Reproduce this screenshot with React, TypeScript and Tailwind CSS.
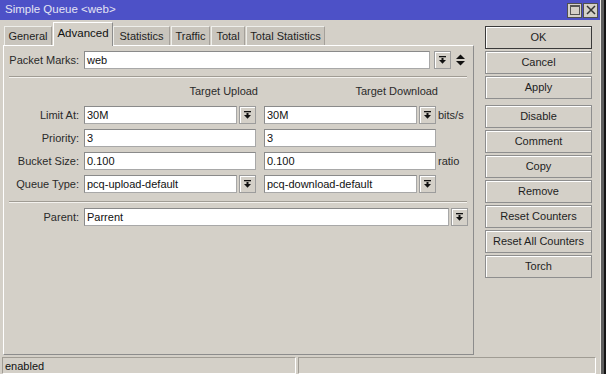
import React from 'react';

const DropIcon: React.FC = () => (
  <svg width="7" height="8" viewBox="0 0 7 8" className="block">
    <rect x="0" y="0" width="7" height="1.3" fill="#111" />
    <rect x="2.5" y="2" width="2" height="2.5" fill="#111" />
    <polygon points="0,4 7,4 3.5,7.8" fill="#111" />
  </svg>
);

const DropButton: React.FC = () => (
  <div className="flex h-[18px] w-[17px] shrink-0 items-center justify-center border border-[#9c9c9c] bg-[#d4d0c8] shadow-[inset_1px_1px_0_#fff]">
    <DropIcon />
  </div>
);

const Field: React.FC<{ value: string; w: string }> = ({ value, w }) => (
  <div
    className={`flex h-[18px] items-center border border-[#a8a8a8] border-l-[#8a8a8a] border-t-[#8a8a8a] bg-white pl-[2px] leading-none text-[#111] ${w}`}
  >
    {value}
  </div>
);

const Separator: React.FC = () => (
  <div className="ml-[5px] w-[458px] border-t border-b border-t-[#a09c94] border-b-[#f4f2ee]" />
);

const tabs = [
  { name: 'General', w: 'w-[48px] ml-[1px]' },
  { name: 'Advanced', w: 'w-[60px] ml-[1px]', active: true },
  { name: 'Statistics', w: 'w-[57px]' },
  { name: 'Traffic', w: 'w-[39px] ml-[1px]' },
  { name: 'Total', w: 'w-[34px] ml-[1px]' },
  { name: 'Total Statistics', w: 'w-[79px] ml-[1px]' },
];

const buttons = ['OK', 'Cancel', 'Apply', 'Disable', 'Comment', 'Copy', 'Remove', 'Reset Counters', 'Reset All Counters', 'Torch'];

const Label: React.FC<{ text: string }> = ({ text }) => (
  <div className="w-[76px] shrink-0 pr-[1px] text-right text-[#2a2a2a]">{text}</div>
);

const App: React.FC = () => {
  return (
    <div className="flex h-[374px] w-[606px] overflow-hidden bg-[#d4d0c8] font-['Liberation_Sans',Arial,sans-serif] text-[11px] text-[#1e1e1e]">
      <div className="flex w-[600px] flex-col">
        {/* title bar */}
        <div className="flex h-[20px] shrink-0 items-center justify-between bg-[#4d51c7] pl-[5px] pr-[2px] text-[#e4e4f4]">
          <span className="text-[11.5px]">Simple Queue &lt;web&gt;</span>
          <div className="flex gap-[1px]">
            <div className="flex h-[15px] w-[15px] items-center justify-center border border-[#505050] bg-[#d4d0c8]">
              <div className="h-[10px] w-[10px] border border-[#555] border-t-2" />
            </div>
            <div className="flex h-[15px] w-[15px] items-center justify-center border border-[#505050] bg-[#d4d0c8]">
              <svg width="10" height="10" viewBox="0 0 10 10">
                <path d="M1 1 L9 9 M9 1 L1 9" stroke="#333" strokeWidth="1.5" />
              </svg>
            </div>
          </div>
        </div>

        {/* body */}
        <div className="flex flex-1">
          <div className="ml-[3px] flex w-[471px] flex-col pt-[2px]">
            <div className="flex h-[23px] items-end">
              {tabs.map((t) =>
                t.active ? (
                  <div
                    key={t.name}
                    className={`relative z-10 -mb-[1px] flex h-[24px] items-center justify-center border-l border-r border-t border-l-white border-r-[#8c8c8c] border-t-white bg-[#d4d0c8] pb-[2px] text-[11.5px] text-[#111] ${t.w}`}
                  >
                    {t.name}
                  </div>
                ) : (
                  <div
                    key={t.name}
                    className={`flex h-[19px] items-center justify-center border-l border-r border-t border-l-[#eeeeea] border-r-[#a4a09a] border-t-[#eeeeea] bg-[#c9c5bd] text-[#1e1e1e] ${t.w}`}
                  >
                    {t.name}
                  </div>
                )
              )}
            </div>

            <div className="flex flex-1 flex-col border border-b-[#8c8c8c] border-l-white border-r-[#8c8c8c] border-t-white pt-[5px]">
              {/* packet marks */}
              <div className="flex h-[18px] items-center gap-[4px]">
                <Label text="Packet Marks:" />
                <Field value="web" w="w-[346px]" />
                <div className="-ml-[2px] flex items-center">
                  <div className="ml-[2px]">
                    <DropButton />
                  </div>
                  <svg width="9" height="12" viewBox="0 0 9 12" className="ml-[5px]">
                    <polygon points="0,5 9,5 4.5,0.5" fill="#111" />
                    <polygon points="0,7 9,7 4.5,11.5" fill="#111" />
                  </svg>
                </div>
              </div>

              <div className="mt-[7px]">
                <Separator />
              </div>

              {/* headers */}
              <div className="mt-[7px] flex h-[13px] items-center gap-[8px] pl-[80px] leading-none text-[#2a2a2a]">
                <div className="w-[174px] text-right">Target Upload</div>
                <div className="w-[172px] text-right">Target Download</div>
              </div>

              <div className="mt-[8px] flex flex-col gap-[5px]">
                {/* Limit At */}
                <div className="flex h-[18px] items-center gap-[4px]">
                  <Label text="Limit At:" />
                  <div className="flex gap-[2px]">
                    <Field value="30M" w="w-[153px]" />
                    <DropButton />
                  </div>
                  <div className="ml-[4px] flex gap-[2px]">
                    <Field value="30M" w="w-[153px]" />
                    <DropButton />
                  </div>
                  <span className="-ml-[2px] text-[#2a2a2a]">bits/s</span>
                </div>
                {/* Priority */}
                <div className="flex h-[18px] items-center gap-[4px]">
                  <Label text="Priority:" />
                  <Field value="3" w="w-[172px]" />
                  <div className="ml-[4px]">
                    <Field value="3" w="w-[172px]" />
                  </div>
                </div>
                {/* Bucket Size */}
                <div className="flex h-[18px] items-center gap-[4px]">
                  <Label text="Bucket Size:" />
                  <Field value="0.100" w="w-[172px]" />
                  <div className="ml-[4px]">
                    <Field value="0.100" w="w-[172px]" />
                  </div>
                  <span className="-ml-[2px] text-[#2a2a2a]">ratio</span>
                </div>
                {/* Queue Type */}
                <div className="flex h-[18px] items-center gap-[4px]">
                  <Label text="Queue Type:" />
                  <div className="flex gap-[2px]">
                    <Field value="pcq-upload-default" w="w-[153px]" />
                    <DropButton />
                  </div>
                  <div className="ml-[4px] flex gap-[2px]">
                    <Field value="pcq-download-default" w="w-[153px]" />
                    <DropButton />
                  </div>
                </div>
              </div>

              <div className="mt-[8px]">
                <Separator />
              </div>

              {/* Parent */}
              <div className="mt-[5px] flex h-[18px] items-center gap-[4px]">
                <Label text="Parent:" />
                <div className="flex gap-[2px]">
                  <Field value="Parrent" w="w-[365px]" />
                  <DropButton />
                </div>
              </div>
            </div>
          </div>

          {/* right buttons */}
          <div className="ml-[11px] flex w-[107px] flex-col gap-[2px] pt-[6px]">
            {buttons.map((b) => (
              <div
                key={b}
                className={`flex h-[23px] shrink-0 items-center justify-center bg-[#d4d0c8] text-[#1e1e1e] ${
                  b === 'OK'
                    ? 'border border-[#3a3a3a] shadow-[inset_1px_1px_0_#fff]'
                    : 'border border-[#8e8e8e] shadow-[inset_1px_1px_0_#fff]'
                } ${b === 'Disable' ? 'mt-[4px]' : ''}`}
              >
                {b}
              </div>
            ))}
          </div>
        </div>

        {/* status bar */}
        <div className="flex h-[19px] shrink-0 gap-[2px] pl-[2px] pt-[2px]">
          <div className="flex w-[294px] items-center border border-b-white border-l-[#a09c94] border-r-white border-t-[#a09c94] pl-[2px] pt-[1px] text-[#111]">
            enabled
          </div>
          <div className="w-[298px] border border-b-white border-l-[#a09c94] border-r-white border-t-[#a09c94]" />
        </div>
      </div>
      <div className="w-[6px] border-l border-r-2 border-l-[#e8e6e0] border-r-[#151515] bg-[#5e5e5e]" />
    </div>
  );
};

export default App;
